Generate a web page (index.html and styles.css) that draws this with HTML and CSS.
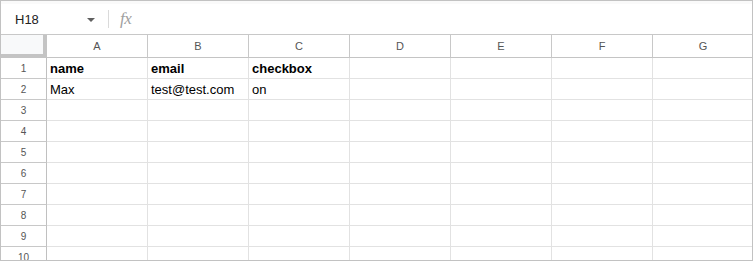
FILE: index.html
```html
<!DOCTYPE html>
<html lang="en">
<head>
    <meta charset="UTF-8">
    <meta name="viewport" content="width=device-width, initial-scale=1.0">
    <title>Sheet</title>

    <link rel="stylesheet" href="styles.css">
</head>
<body>

    <div class="sheet">
        <div class="formula-bar">
            <div class="name-box">
                <span class="cell-ref">H18</span>
                <span class="caret"></span>
            </div>
            <span class="divider"></span>
            <span class="fx">fx</span>
        </div>

        <div class="grid">
            <div class="corner"></div>
            <div class="col-head">A</div>
            <div class="col-head">B</div>
            <div class="col-head">C</div>
            <div class="col-head">D</div>
            <div class="col-head">E</div>
            <div class="col-head">F</div>
            <div class="col-head">G</div>

            <div class="row-head">1</div>
            <div class="cell bold">name</div>
            <div class="cell bold">email</div>
            <div class="cell bold">checkbox</div>
            <div class="cell"></div><div class="cell"></div><div class="cell"></div><div class="cell"></div>

            <div class="row-head">2</div>
            <div class="cell">Max</div>
            <div class="cell">test@test.com</div>
            <div class="cell">on</div>
            <div class="cell"></div><div class="cell"></div><div class="cell"></div><div class="cell"></div>

            <div class="row-head">3</div>
            <div class="cell"></div><div class="cell"></div><div class="cell"></div><div class="cell"></div><div class="cell"></div><div class="cell"></div><div class="cell"></div>
            <div class="row-head">4</div>
            <div class="cell"></div><div class="cell"></div><div class="cell"></div><div class="cell"></div><div class="cell"></div><div class="cell"></div><div class="cell"></div>
            <div class="row-head">5</div>
            <div class="cell"></div><div class="cell"></div><div class="cell"></div><div class="cell"></div><div class="cell"></div><div class="cell"></div><div class="cell"></div>
            <div class="row-head">6</div>
            <div class="cell"></div><div class="cell"></div><div class="cell"></div><div class="cell"></div><div class="cell"></div><div class="cell"></div><div class="cell"></div>
            <div class="row-head">7</div>
            <div class="cell"></div><div class="cell"></div><div class="cell"></div><div class="cell"></div><div class="cell"></div><div class="cell"></div><div class="cell"></div>
            <div class="row-head">8</div>
            <div class="cell"></div><div class="cell"></div><div class="cell"></div><div class="cell"></div><div class="cell"></div><div class="cell"></div><div class="cell"></div>
            <div class="row-head">9</div>
            <div class="cell"></div><div class="cell"></div><div class="cell"></div><div class="cell"></div><div class="cell"></div><div class="cell"></div><div class="cell"></div>
            <div class="row-head">10</div>
            <div class="cell"></div><div class="cell"></div><div class="cell"></div><div class="cell"></div><div class="cell"></div><div class="cell"></div><div class="cell"></div>
        </div>
    </div>

</body>
</html>
```

FILE: styles.css
```css
body {
    margin: 0;
    font-family: 'Liberation Sans', Arial, sans-serif;
    background-color: #fff;
}

.sheet {
    width: 753px;
    height: 261px;
    box-sizing: border-box;
    border: 1px solid #c2c2c2;
    overflow: hidden;
    background-color: #fff;
}

/* barre de formule */
.formula-bar {
    display: flex;
    align-items: center;
    height: 34px;
    box-sizing: border-box;
    border-top: 3px solid #fafafa;
    border-bottom: 1px solid #c8c8c8;
}

.name-box {
    display: flex;
    align-items: center;
    width: 94px;
    padding-left: 14px;
    box-sizing: border-box;
}

.cell-ref {
    flex: 1;
    font-size: 13px;
    color: #222;
}

.caret {
    width: 0;
    height: 0;
    border-left: 4px solid transparent;
    border-right: 4px solid transparent;
    border-top: 4px solid #606060;
    margin-top: 1px;
}

.divider {
    width: 1px;
    height: 18px;
    background-color: #dadada;
    margin-left: 13px;
    margin-right: 11px;
}

.fx {
    font-family: 'Liberation Serif', 'Times New Roman', serif;
    font-style: italic;
    font-size: 17px;
    color: #a0a0a0;
    letter-spacing: -0.5px;
}

/* grille */
.grid {
    display: grid;
    grid-template-columns: 46px repeat(7, 101px);
    grid-template-rows: 23px repeat(10, 21px);
}

.corner {
    background-color: #f8f9fa;
    border-right: 4px solid #c4c4c4;
    border-bottom: 4px solid #c4c4c4;
}

.col-head {
    display: flex;
    align-items: center;
    justify-content: center;
    font-size: 11px;
    color: #555;
    border-right: 1px solid #c8c8c8;
    border-bottom: 1px solid #c4c4c4;
}

.row-head {
    display: flex;
    align-items: center;
    justify-content: center;
    font-size: 10px;
    color: #555;
    border-right: 1px solid #c0c0c0;
    border-bottom: 1px solid #c8c8c8;
    padding-top: 1px;
    box-sizing: border-box;
}

.cell {
    display: flex;
    align-items: center;
    padding-left: 3px;
    font-size: 13px;
    color: #000;
    border-right: 1px solid #e2e2e2;
    border-bottom: 1px solid #e2e2e2;
    white-space: nowrap;
    overflow: hidden;
}

.bold {
    font-weight: bold;
}
```
